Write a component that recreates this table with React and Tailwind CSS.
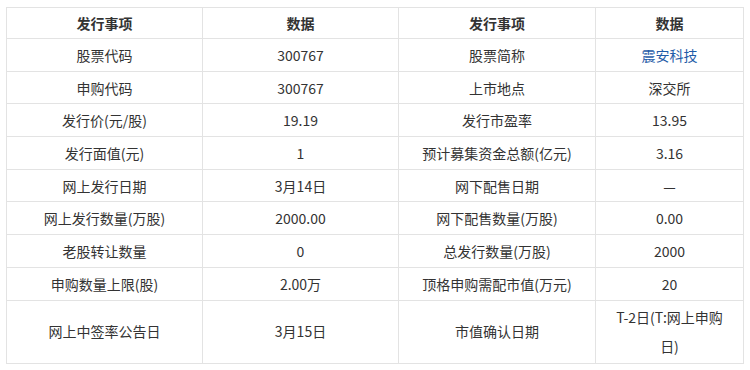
import React from 'react';

// 新股发行信息表
const rows = [
  ['股票代码', '300767', '股票简称', '震安科技'],
  ['申购代码', '300767', '上市地点', '深交所'],
  ['发行价(元/股)', '19.19', '发行市盈率', '13.95'],
  ['发行面值(元)', '1', '预计募集资金总额(亿元)', '3.16'],
  ['网上发行日期', '3月14日', '网下配售日期', '—'],
  ['网上发行数量(万股)', '2000.00', '网下配售数量(万股)', '0.00'],
  ['老股转让数量', '0', '总发行数量(万股)', '2000'],
  ['申购数量上限(股)', '2.00万', '顶格申购需配市值(万元)', '20'],
];

function Cell({ children, className = '' }) {
  return (
    <td className={`border border-[#e3e3e3] px-[7px] py-0 text-center align-middle ${className}`}>
      {children}
    </td>
  );
}

export default function App() {
  return (
    <div
      className="bg-white w-[750px] h-[370px] pl-[6px] pt-[7px] text-[14px] text-[#333]"
      style={{ fontFamily: '"Noto Sans CJK SC", "Noto Sans", sans-serif' }}
    >
      <table className="table-fixed border-collapse w-[737px]">
        <colgroup>
          <col className="w-[196px]" />
          <col className="w-[196px]" />
          <col className="w-[197px]" />
          <col className="w-[148px]" />
        </colgroup>
        <thead>
          <tr className="h-[31px] leading-[20px]">
            <Cell className="font-bold">发行事项</Cell>
            <Cell className="font-bold">数据</Cell>
            <Cell className="font-bold">发行事项</Cell>
            <Cell className="font-bold">数据</Cell>
          </tr>
        </thead>
        <tbody>
          {rows.map((r, i) => (
            <tr key={i} className="h-[32.7px] leading-[20px]">
              <Cell>{r[0]}</Cell>
              <Cell>{r[1]}</Cell>
              <Cell>{r[2]}</Cell>
              <Cell className={i === 0 ? 'text-[#1f5ca8]' : ''}>{r[3]}</Cell>
            </tr>
          ))}
          <tr className="h-[63px] leading-[29px]">
            <Cell>网上中签率公告日</Cell>
            <Cell>3月15日</Cell>
            <Cell>市值确认日期</Cell>
            <Cell>
              T-2日(T:网上申购
              <br />
              日)
            </Cell>
          </tr>
        </tbody>
      </table>
    </div>
  );
}
